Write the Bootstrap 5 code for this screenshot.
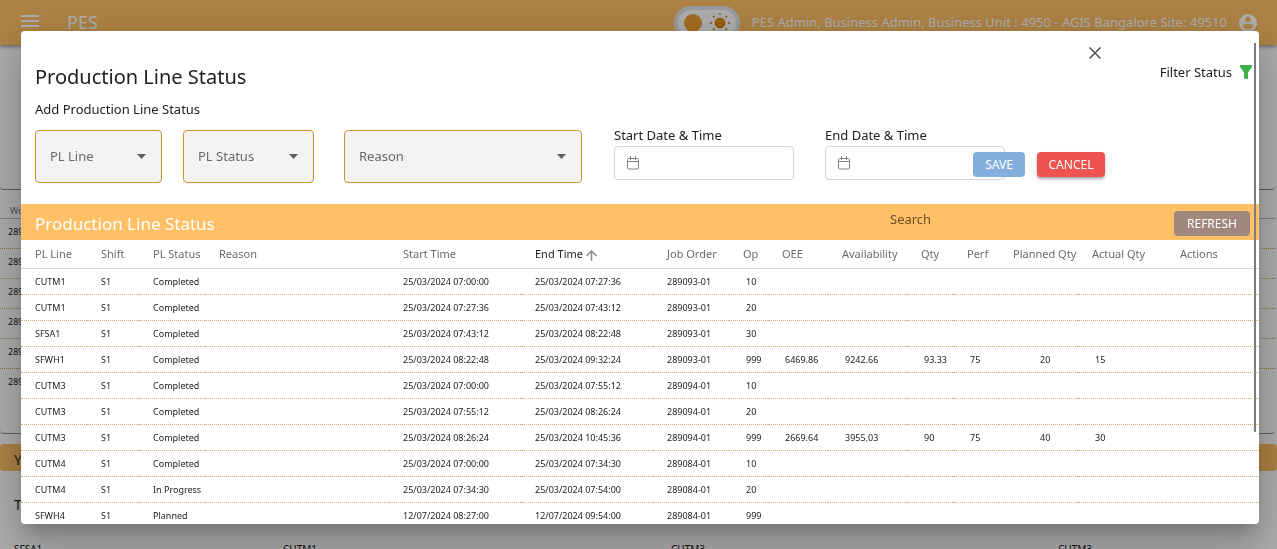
<!DOCTYPE html>
<html lang="en">
<head>
<meta charset="utf-8">
<meta name="viewport" content="width=device-width, initial-scale=1">
<title>PES - Production Line Status</title>
<link href="https://cdn.jsdelivr.net/npm/bootstrap@5.3.0/dist/css/bootstrap.min.css" rel="stylesheet">
<style>
body{font-family:"Noto Sans","Open Sans",sans-serif;font-size:13px;color:#212121;background:#fff;height:100vh;overflow:hidden}
.app-bar{height:45px;background:#ffc066;color:#fff;padding:0 20px 0 21px;box-shadow:0 2px 4px rgba(0,0,0,.4)}
.app-name{font-size:18px;margin-left:28px}
.user-text{font-size:13px;margin:0 12px}
.mode-switch{width:66px;height:34px;border:4px solid #e2e4ea;border-radius:17px;background:#fff;padding:0 6px}
.page-card{border-bottom:1px solid #888;border-radius:0 0 4px 4px;margin-right:2px}
.overview-card{height:145px}
.orders-card{margin-top:14px;height:230px}
.orders{font-size:9px;table-layout:fixed}
.orders th{height:14px;padding:0 10px;font-weight:400;color:#757575}
.orders thead tr{border-bottom:1px solid #bbb}
.orders td{height:30px;padding:0 8px 3px}
.orders tbody tr{border-bottom:1px dotted #c8a064}
.orders tbody tr:last-child{border:0}
.section-bar{background:#ffc066;height:27px;margin-top:10px;padding:4px 14px 0;border-radius:4px;font-size:14px}
.section-label{padding:23px 14px 0;font-size:14px}
.line-grid{padding:27px 14px 0;font-size:10px;display:grid;grid-template-columns:269px 388px 387px 1fr}
.scrim{background:rgba(0,0,0,.32)}
.status-dialog{max-width:none;margin:31px 18px 25px 21px;height:calc(100% - 56px)}
.status-dialog .modal-content{height:100%;border:0;border-radius:4px;overflow:hidden;box-shadow:0 11px 15px -7px rgba(0,0,0,.2),0 24px 38px 3px rgba(0,0,0,.14),0 9px 46px 8px rgba(0,0,0,.12)}
.dialog-top{padding:0 7px 0 14px;height:80px}
.dialog-title{font-size:20px;line-height:28px;margin:32px 0 0;font-weight:400}
.dialog-sub{font-size:13px;line-height:20px;margin:8px 0 0}
.close-btn{margin-top:14px;line-height:0}
.filter-btn{margin:31px 0 0 57px;font-size:13px;line-height:20px;color:#212121}
.entry-form{padding:0 14px;height:93px}
.picks{margin-top:19px}
.pick{height:53px;border:1px solid #cf922b;border-radius:4px;background-color:#f3f3f3;color:#6a6a6a;font-size:13px;padding:0 14px;background-image:url("data:image/svg+xml,%3Csvg xmlns='http://www.w3.org/2000/svg' viewBox='0 0 9 5'%3E%3Cpath d='M0 0h9L4.500 5z' fill='%23606060'/%3E%3C/svg%3E");background-size:9px 5px;background-position:right 15px center}
.w-line{width:127px}.w-status{width:131px;margin-left:21px}.w-reason{width:238px;margin-left:30px}
.date-field{width:180px;margin:14px 0 0 32px}
.date-field + .date-field{margin-left:31px}
.date-field label{display:block;line-height:21px;font-size:13px}
.date-box{border:1px solid #d4d4d4;border-radius:4px;height:34px;padding:0 12px}
.date-box input{min-width:0;font-size:13px}
.act-btn{height:25px;padding:0;border:0;border-radius:4px;color:#fff;font-size:12px;line-height:25px}
.act-btn:hover{color:#fff}
.save-btn{background:#83aedd;width:52px;margin-left:-32px;z-index:1}
.cancel-btn{background:#ef5350;width:68px;margin-left:12px;box-shadow:0 2px 3px rgba(0,0,0,.35)}
.form-acts{margin-top:41px}
.list-bar{background:#ffc066;height:36px;padding:2px 9px 0 14px}
.list-title{font-size:17px;line-height:32px;padding-top:2px;color:#fff;margin:0;font-weight:400}
.search-box{width:284px;font-size:13px;line-height:20px;padding:0 0 9px}
.search-box::placeholder{color:#6b4f25;opacity:1}
.refresh-btn{background:#a1887f;width:76px}
.lines{table-layout:fixed;font-size:9px}
.lines th{height:28px;padding:1px 0 0 14px;font-size:11px;font-weight:400;color:#6b6b6b;white-space:nowrap}
.lines thead tr{border-bottom:1px solid #d6d6d6}
.lines td{height:26px;padding:2px 0 0 14px;white-space:nowrap}
.lines tbody tr{border-bottom:1px dotted #d3ae72}
.lines td:nth-child(n+8){padding-left:17px}
.lines td:nth-child(13){padding-left:41px}
.lines th.sorted{color:#212121}
.c39{width:39px}.c46{width:46px}.c52{width:52px}.c60{width:60px}.c66{width:66px}.c76{width:76px}.c79{width:79px}.c88{width:88px}.c93{width:93px}.c132{width:132px}
.scroll-thumb{top:12px;right:3px;width:2px;height:79%;background:#7d7d7d}
</style>
</head>
<body>
<header class="app-bar d-flex align-items-center position-relative">
  <svg width="18" height="12" viewBox="0 0 18 12" fill="none" stroke="#fff" stroke-width="2" aria-hidden="true" class="mb-1"><path d="M0 1h18M0 6h18M0 11h18"/></svg>
  <span class="app-name">PES</span>
  <div class="mode-switch ms-auto d-flex align-items-center justify-content-between">
    <svg width="18" height="18" viewBox="0 0 18 18" aria-hidden="true"><circle cx="9" cy="9" r="9" fill="#f0a030"/></svg>
    <svg width="20" height="20" viewBox="0 0 20 20" stroke="#c8780a" stroke-width="1.500" aria-hidden="true"><circle cx="10" cy="10" r="4.500" fill="#f08c00"/><path d="M10 0v2M10 18v2M0 10h2M18 10h2M3 3l1.500 1.500M15.500 15.500L17 17M3 17l1.500-1.500M15.500 4.500L17 3"/></svg>
  </div>
  <span class="user-text">PES Admin, Business Admin, Business Unit : 4950 - AGIS Bangalore Site: 49510</span>
  <svg width="18" height="18" viewBox="2 2 20 20" fill="#fff" aria-hidden="true"><path d="M12 2a10 10 0 100 20 10 10 0 000-20zm0 3a3 3 0 110 6 3 3 0 010-6zm0 14.200a7.200 7.200 0 01-6-3.200c0-2 4-3.100 6-3.100s6 1.100 6 3.100a7.200 7.200 0 01-6 3.200z"/></svg>
</header>
<main>
  <section class="page-card overview-card"></section>
  <section class="page-card orders-card">
    <table class="orders w-100">
      <thead><tr><th>Work Order</th></tr></thead>
      <tbody>
        <tr><td>289093-01</td></tr><tr><td>289093-01</td></tr><tr><td>289093-01</td></tr><tr><td>289093-01</td></tr><tr><td>289094-01</td></tr><tr><td>289094-01</td></tr>
      </tbody>
    </table>
  </section>
  <div class="section-bar d-flex align-items-center">Yield</div>
  <div class="section-label">Today</div>
  <div class="line-grid"><span>SFSA1</span><span>CUTM1</span><span>CUTM3</span><span>CUTM3</span></div>
</main>

<div class="modal d-block scrim" tabindex="-1" role="dialog" aria-labelledby="dlg-title">
  <div class="modal-dialog status-dialog">
    <div class="modal-content">
      <div class="dialog-top d-flex align-items-start flex-shrink-0">
        <div>
          <h1 class="dialog-title" id="dlg-title">Production Line Status</h1>
          <p class="dialog-sub">Add Production Line Status</p>
        </div>
        <button type="button" class="btn p-0 border-0 close-btn ms-auto" aria-label="Close">
          <svg width="16" height="16" viewBox="0 0 16 16" fill="none" stroke="#555" stroke-width="1.600"><path d="M2.500 2.500l11 11M13.500 2.500l-11 11"/></svg>
        </button>
        <button type="button" class="btn p-0 border-0 filter-btn d-flex align-items-center">Filter Status
          <svg class="ms-2" width="12" height="14" viewBox="0 0 12 14" fill="#3fae49" aria-hidden="true"><path d="M0 0h12v2L8 7.500V14H5l-1-1.500v-5L0 2z"/></svg>
        </button>
      </div>
      <form class="entry-form d-flex align-items-start flex-shrink-0">
        <div class="d-flex picks">
          <select class="form-select pick w-line" aria-label="PL Line"><option>PL Line</option></select>
          <select class="form-select pick w-status" aria-label="PL Status"><option>PL Status</option></select>
          <select class="form-select pick w-reason" aria-label="Reason"><option>Reason</option></select>
        </div>
        <div class="date-field">
          <label for="start-dt">Start Date &amp; Time</label>
          <div class="date-box d-flex align-items-center">
            <svg class="flex-shrink-0" width="12" height="14" viewBox="0 0 12 14" fill="none" stroke="#808080" aria-hidden="true"><rect x=".5" y="2.500" width="11" height="10.500" rx="1"/><path d="M.5 5.500h11M3.500 0v4M8.500 0v4"/></svg>
            <input id="start-dt" type="text" class="flex-grow-1 border-0 bg-transparent">
          </div>
        </div>
        <div class="date-field">
          <label for="end-dt">End Date &amp; Time</label>
          <div class="date-box d-flex align-items-center">
            <svg class="flex-shrink-0" width="12" height="14" viewBox="0 0 12 14" fill="none" stroke="#808080" aria-hidden="true"><rect x=".5" y="2.500" width="11" height="10.500" rx="1"/><path d="M.5 5.500h11M3.500 0v4M8.500 0v4"/></svg>
            <input id="end-dt" type="text" class="flex-grow-1 border-0 bg-transparent">
          </div>
        </div>
        <div class="form-acts d-flex">
          <button type="button" class="btn act-btn save-btn">SAVE</button>
          <button type="button" class="btn act-btn cancel-btn">CANCEL</button>
        </div>
      </form>
      <div class="list-bar d-flex align-items-center flex-shrink-0">
        <h2 class="list-title">Production Line Status</h2>
        <input type="search" class="search-box ms-auto border-0 bg-transparent" placeholder="Search" aria-label="Search">
        <button type="button" class="btn act-btn refresh-btn">REFRESH</button>
      </div>
      <table class="lines w-100">
        <colgroup><col class="c66"><col class="c52"><col class="c66"><col><col class="c132"><col class="c132"><col class="c76"><col class="c39"><col class="c60"><col class="c79"><col class="c46"><col class="c46"><col class="c79"><col class="c88"><col class="c93"></colgroup>
        <thead><tr><th>PL Line</th><th>Shift</th><th>PL Status</th><th>Reason</th><th>Start Time</th><th class="sorted">End Time <svg width="11" height="11" viewBox="0 0 11 11" fill="none" stroke="#8a8a96" stroke-width="1.500" aria-label="ascending"><path d="M5.500 11V1M.5 6l5-5 5 5"/></svg></th><th>Job Order</th><th>Op</th><th>OEE</th><th>Availability</th><th>Qty</th><th>Perf</th><th>Planned Qty</th><th>Actual Qty</th><th>Actions</th></tr></thead>
        <tbody>
          <tr><td>CUTM1</td><td>S1</td><td>Completed</td><td></td><td>25/03/2024 07:00:00</td><td>25/03/2024 07:27:36</td><td>289093-01</td><td>10</td><td></td><td></td><td></td><td></td><td></td><td></td><td></td></tr>
          <tr><td>CUTM1</td><td>S1</td><td>Completed</td><td></td><td>25/03/2024 07:27:36</td><td>25/03/2024 07:43:12</td><td>289093-01</td><td>20</td><td></td><td></td><td></td><td></td><td></td><td></td><td></td></tr>
          <tr><td>SFSA1</td><td>S1</td><td>Completed</td><td></td><td>25/03/2024 07:43:12</td><td>25/03/2024 08:22:48</td><td>289093-01</td><td>30</td><td></td><td></td><td></td><td></td><td></td><td></td><td></td></tr>
          <tr><td>SFWH1</td><td>S1</td><td>Completed</td><td></td><td>25/03/2024 08:22:48</td><td>25/03/2024 09:32:24</td><td>289093-01</td><td>999</td><td>6469.86</td><td>9242.66</td><td>93.33</td><td>75</td><td>20</td><td>15</td><td></td></tr>
          <tr><td>CUTM3</td><td>S1</td><td>Completed</td><td></td><td>25/03/2024 07:00:00</td><td>25/03/2024 07:55:12</td><td>289094-01</td><td>10</td><td></td><td></td><td></td><td></td><td></td><td></td><td></td></tr>
          <tr><td>CUTM3</td><td>S1</td><td>Completed</td><td></td><td>25/03/2024 07:55:12</td><td>25/03/2024 08:26:24</td><td>289094-01</td><td>20</td><td></td><td></td><td></td><td></td><td></td><td></td><td></td></tr>
          <tr><td>CUTM3</td><td>S1</td><td>Completed</td><td></td><td>25/03/2024 08:26:24</td><td>25/03/2024 10:45:36</td><td>289094-01</td><td>999</td><td>2669.64</td><td>3955.03</td><td>90</td><td>75</td><td>40</td><td>30</td><td></td></tr>
          <tr><td>CUTM4</td><td>S1</td><td>Completed</td><td></td><td>25/03/2024 07:00:00</td><td>25/03/2024 07:34:30</td><td>289084-01</td><td>10</td><td></td><td></td><td></td><td></td><td></td><td></td><td></td></tr>
          <tr><td>CUTM4</td><td>S1</td><td>In Progress</td><td></td><td>25/03/2024 07:34:30</td><td>25/03/2024 07:54:00</td><td>289084-01</td><td>20</td><td></td><td></td><td></td><td></td><td></td><td></td><td></td></tr>
          <tr><td>SFWH4</td><td>S1</td><td>Planned</td><td></td><td>12/07/2024 08:27:00</td><td>12/07/2024 09:54:00</td><td>289084-01</td><td>999</td><td></td><td></td><td></td><td></td><td></td><td></td><td></td></tr>
        </tbody>
      </table>
      <div class="scroll-thumb position-absolute"></div>
    </div>
  </div>
</div>
<script src="https://cdn.jsdelivr.net/npm/bootstrap@5.3.0/dist/js/bootstrap.bundle.min.js"></script>
</body>
</html>
